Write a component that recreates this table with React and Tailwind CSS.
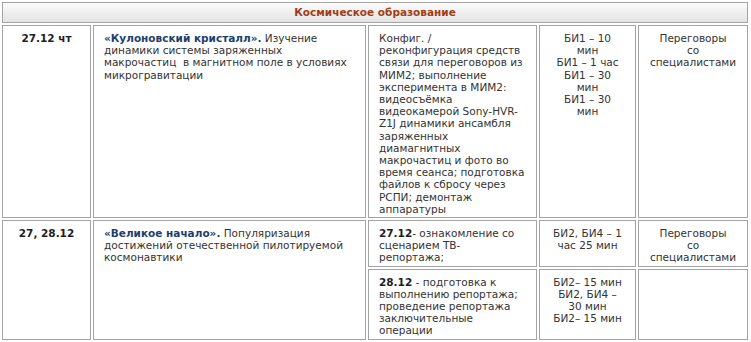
const cell =
  "border border-[#a3a3a3] align-top pt-[6px] pb-[2px] px-[10px] text-[#333] font-normal leading-[12.2px]";

const Br = () => <br />;

export default function App() {
  return (
    <div
      className="bg-white w-[751px] h-[342px] overflow-hidden text-[10.5px] leading-[12.2px]"
      style={{ fontFamily: '"DejaVu Sans", Verdana, sans-serif' }}
    >
      <table className="table-fixed border-separate border-spacing-[2px] w-[750px]">
        <colgroup>
          <col className="w-[89px]" />
          <col className="w-[273px]" />
          <col className="w-[169px]" />
          <col className="w-[97px]" />
          <col className="w-[110px]" />
        </colgroup>
        <thead>
          <tr>
            <th
              colSpan={5}
              className="border border-[#a3a3a3] h-[21px] p-0 leading-[13px] bg-gradient-to-b from-[#fbfbfb] to-[#e4e4e4] text-[#a23c16] font-bold text-center align-middle"
            >
              Космическое образование
            </th>
          </tr>
        </thead>
        <tbody className="whitespace-nowrap">
          <tr>
            <td className={`${cell} text-center !font-bold !text-[#1e1e1e]`}>
              27.12 чт
            </td>
            <td className={cell}>
              <b className="text-[#1d3f6e]">«Кулоновский кристалл».</b> Изучение
              <Br />
              динамики системы заряженных
              <Br />
              макрочастиц&nbsp; в магнитном поле в условиях
              <Br />
              микрогравитации
            </td>
            <td className={cell}>
              Конфиг. /<Br />
              реконфигурация средств
              <Br />
              связи для переговоров из
              <Br />
              МИМ2; выполнение
              <Br />
              эксперимента в МИМ2:
              <Br />
              видеосъёмка
              <Br />
              видеокамерой Sony-HVR-
              <Br />
              Z1J динамики ансамбля
              <Br />
              заряженных
              <Br />
              диамагнитных
              <Br />
              макрочастиц и фото во
              <Br />
              время сеанса; подготовка
              <Br />
              файлов к сбросу через
              <Br />
              РСПИ; демонтаж
              <Br />
              аппаратуры
            </td>
            <td className={`${cell} text-center`}>
              БИ1 – 10
              <Br />
              мин
              <Br />
              БИ1 – 1 час
              <Br />
              БИ1 – 30
              <Br />
              мин
              <Br />
              БИ1 – 30
              <Br />
              мин
            </td>
            <td className={`${cell} text-center`}>
              Переговоры
              <Br />
              со
              <Br />
              специалистами
            </td>
          </tr>
          <tr>
            <td rowSpan={2} className={`${cell} text-center !font-bold !text-[#1e1e1e]`}>
              27, 28.12
            </td>
            <td rowSpan={2} className={cell}>
              <b className="text-[#1d3f6e]">«Великое начало».</b> Популяризация
              <Br />
              достижений отечественной пилотируемой
              <Br />
              космонавтики
            </td>
            <td className={cell}>
              <b className="text-[#1e1e1e]">27.12</b>- ознакомление со
              <Br />
              сценарием ТВ-
              <Br />
              репортажа;
            </td>
            <td className={`${cell} text-center`}>
              БИ2, БИ4 – 1
              <Br />
              час 25 мин
            </td>
            <td className={`${cell} text-center`}>
              Переговоры
              <Br />
              со
              <Br />
              специалистами
            </td>
          </tr>
          <tr>
            <td className={cell}>
              <b className="text-[#1e1e1e]">28.12</b> - подготовка к
              <Br />
              выполнению репортажа;
              <Br />
              проведение репортажа
              <Br />
              заключительные
              <Br />
              операции
            </td>
            <td className={`${cell} text-center`}>
              БИ2– 15 мин
              <Br />
              БИ2, БИ4 –
              <Br />
              30 мин
              <Br />
              БИ2– 15 мин
            </td>
            <td className={cell}></td>
          </tr>
        </tbody>
      </table>
    </div>
  );
}
